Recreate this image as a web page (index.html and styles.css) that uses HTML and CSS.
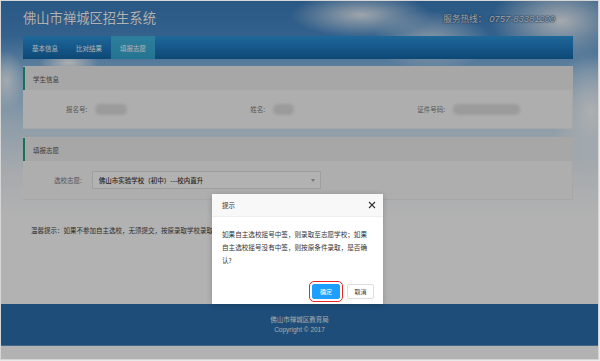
FILE: index.html
```html
<!DOCTYPE html>
<html lang="zh-CN">
<head>
<meta charset="utf-8">
<title>佛山市禅城区招生系统</title>
<link rel="stylesheet" href="styles.css">
</head>
<body>
<div class="frame">
  <div class="page">
    <header class="top">
      <div class="brand-row">
        <h1 class="brand">佛山市禅城区招生系统</h1>
        <div class="hotline">服务热线：<span class="num">0757-83381200</span></div>
      </div>
      <nav class="nav">
        <a class="nav-item">基本信息</a>
        <a class="nav-item">比对结果</a>
        <a class="nav-item active">填报志愿</a>
      </nav>
    </header>

    <main class="main">
      <section class="panel">
        <div class="panel-head">学生信息</div>
        <div class="panel-body info-row">
          <div class="field"><span class="lbl">报名号:</span><span class="blur w32"></span></div>
          <div class="field"><span class="lbl">姓名:</span><span class="blur w21"></span></div>
          <div class="field"><span class="lbl">证件号码:</span><span class="blur w67"></span></div>
        </div>
      </section>

      <section class="panel">
        <div class="panel-head">填报志愿</div>
        <div class="panel-body choice-row">
          <span class="lbl">选校志愿:</span>
          <div class="select">
            <span>佛山市实验学校（初中）---校内直升</span>
            <span class="caret"></span>
          </div>
        </div>
      </section>

      <p class="tip">温馨提示：如果不参加自主选校，无须提交，按原录取学校录取。</p>
    </main>

    <footer class="footer">
      <div>佛山市禅城区教育局</div>
      <div>Copyright © 2017</div>
    </footer>
    <div class="rest"></div>
  </div>

  <div class="mask"></div>

  <div class="dialog">
    <div class="dialog-head">
      <span>提示</span>
      <svg class="close" width="8" height="8" viewBox="0 0 8 8"><path d="M1 1L7 7M7 1L1 7" stroke="#333" stroke-width="1.1" fill="none"/></svg>
    </div>
    <div class="dialog-body">如果自主选校摇号中签，则录取至志愿学校；如果自主选校摇号没有中签，则按原条件录取，是否确认?</div>
    <div class="dialog-foot">
      <button class="btn btn-primary">确定</button>
      <button class="btn">取消</button>
    </div>
  </div>
</div>
</body>
</html>
```

FILE: styles.css
```css
* { box-sizing: border-box; }
html, body { margin: 0; padding: 0; }
body {
  width: 600px;
  height: 361px;
  overflow: hidden;
  background: #e9e9e9;
  font-family: "Noto Sans CJK SC", "Noto Sans", sans-serif;
}
.frame {
  position: relative;
  width: 599px;
  height: 360px;
  border: 1px solid #d6d6d6;
  overflow: hidden;
}
.page {
  height: 100%;
  display: flex;
  flex-direction: column;
  background:
    radial-gradient(ellipse 70px 22px at 360px 14px, rgba(255,255,255,0.85), rgba(255,255,255,0) 100%),
    radial-gradient(ellipse 60px 30px at 430px 40px, rgba(255,255,255,0.7), rgba(255,255,255,0) 100%),
    radial-gradient(ellipse 70px 40px at 560px 20px, rgba(255,255,255,0.9), rgba(255,255,255,0) 100%),
    radial-gradient(ellipse 40px 60px at 590px 110px, rgba(255,255,255,0.9), rgba(255,255,255,0) 100%),
    radial-gradient(ellipse 30px 14px at 68px 62px, rgba(255,255,255,0.95), rgba(255,255,255,0) 100%),
    radial-gradient(ellipse 20px 30px at 5px 80px, rgba(255,255,255,0.8), rgba(255,255,255,0) 100%),
    linear-gradient(180deg, #3d7fbf 0px, #4a8cca 35px, #8dbde6 70px, #c8dff1 120px, #eef4f9 170px, #ffffff 215px);
}
.top { padding: 0 25px 0 22px; }
.brand-row {
  height: 35px;
  display: flex;
  align-items: center;
  justify-content: space-between;
}
.brand {
  margin: 0;
  font-size: 13.3px;
  font-weight: 400;
  color: #ffffff;
  text-shadow: 0 0 1px rgba(0,40,80,0.4);
  position: relative;
  top: -1px;
}
.hotline {
  font-size: 8.6px;
  color: #e8eef8;
  margin-right: 18px;
  position: relative;
  top: -1px;
  text-shadow: 0 0 1px #24507c, 0 0 1px #24507c, 0 0 2px #24507c;
}
.hotline .num {
  font-family: "Liberation Sans", Arial, sans-serif;
  font-style: italic;
  font-size: 9.4px;
  margin-left: 3px;
}
.nav {
  height: 23px;
  display: flex;
  background: linear-gradient(180deg, #2d95dc 0%, #1f7ec6 50%, #1468a8 100%);
}
.nav-item {
  padding: 0 9px;
  display: flex;
  align-items: center;
  font-size: 6.5px;
  color: #ffffff;
}
.nav-item.active {
  background: linear-gradient(180deg, #40b6e0 0%, #36a6d2 100%);
}
.main {
  padding: 7px 25px 0 22px;
  flex: 1;
  display: flex;
  flex-direction: column;
  gap: 8px;
}
.panel {
  background: #fafafa;
  border: 1px solid #f0f0f0;
  border-left: none;
}
.panel-head {
  height: 23px;
  display: flex;
  align-items: center;
  padding-left: 8px;
  background: #f0f0f0;
  border-left: 2px solid #23a17e;
  font-size: 6.5px;
  color: #555;
}
.panel-body { height: 38px; }
.info-row {
  display: flex;
  align-items: center;
  padding-left: 43px;
  gap: 123px;
}
.field { display: flex; align-items: center; gap: 8px; }
.lbl { font-size: 6.5px; color: #7a7a7a; }
.blur {
  display: block;
  height: 11px;
  border-radius: 5px;
  background: #dedede;
  filter: blur(1.5px);
}
.w32 { width: 32px; }
.w21 { width: 21px; }
.w67 { width: 67px; }
.choice-row {
  display: flex;
  align-items: center;
  padding-left: 31px;
  gap: 10px;
}
.select {
  width: 229px;
  height: 18px;
  background: #fff;
  border: 1px solid #e2e2e2;
  display: flex;
  align-items: center;
  justify-content: space-between;
  padding: 0 5px 0 6px;
  font-size: 6.5px;
  color: #333;
  font-weight: 500;
}
.caret {
  width: 0; height: 0;
  border-left: 2.5px solid transparent;
  border-right: 2.5px solid transparent;
  border-top: 3px solid #aaa;
}
.tip {
  margin: 17px 0 0 8px;
  font-size: 6.5px;
  color: #444;
}
.footer {
  height: 42px;
  background: #2a6fad;
  border-bottom: 1px solid #5f95c4;
  display: flex;
  flex-direction: column;
  align-items: center;
  justify-content: center;
  font-size: 6.5px;
  line-height: 10px;
  color: #f0f0f0;
  font-family: "Liberation Sans", "Noto Sans CJK SC", sans-serif;
  padding-top: 1px;
}
.rest { height: 13px; background: #ffffff; }
.mask {
  position: absolute;
  inset: 0;
  background: rgba(0,0,0,0.3);
}
.dialog {
  position: absolute;
  left: 211px;
  top: 193px;
  width: 171px;
  height: 110px;
  background: #fff;
  box-shadow: 0 1px 6px rgba(0,0,0,0.2);
  display: flex;
  flex-direction: column;
}
.dialog-head {
  height: 23px;
  display: flex;
  align-items: center;
  justify-content: space-between;
  padding: 0 7px 0 10px;
  background: #f8f8f8;
  border-bottom: 1px solid #eee;
  font-size: 6.5px;
  color: #333;
}
.close { display: block; }
.dialog-body {
  padding: 11px 10px 0 10px;
  font-size: 6.6px;
  line-height: 13px;
  color: #333;
  flex: 1;
}
.dialog-foot {
  display: flex;
  justify-content: flex-end;
  gap: 7px;
  padding: 0 9px 5px 0;
}
.btn {
  height: 15px;
  padding: 0;
  width: 27px;
  border: 1px solid #dedede;
  background: #fff;
  color: #333;
  font-size: 6px;
  font-family: "Noto Sans CJK SC", sans-serif;
  border-radius: 2px;
  display: flex;
  align-items: center;
  justify-content: center;
}
.btn-primary {
  width: 28px;
  background: #1e9fff;
  border-color: #1e9fff;
  color: #fff;
  outline: 1.5px solid #e8262a;
  outline-offset: 2.5px;
}
```
